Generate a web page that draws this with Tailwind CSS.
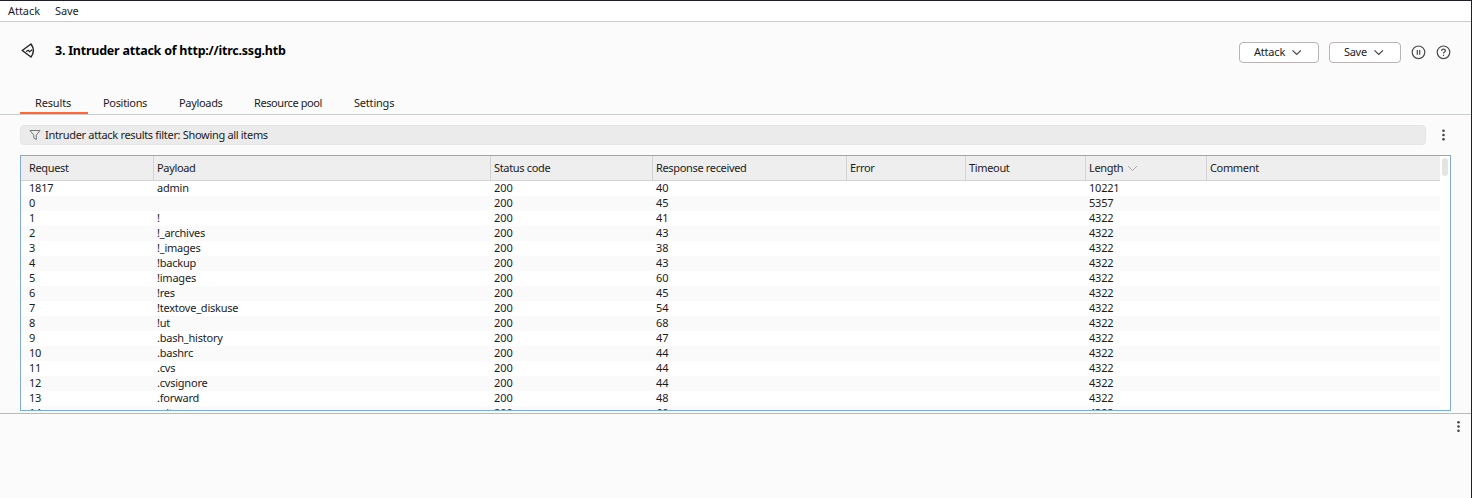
<!DOCTYPE html>
<html lang="en">
<head>
  <meta charset="UTF-8" />
  <meta name="viewport" content="width=device-width, initial-scale=1.0" />
  <title>Intruder attack</title>
  <script src="https://cdn.jsdelivr.net/npm/@tailwindcss/browser@4"></script>
</head>
<body class="h-screen overflow-hidden bg-[#fbfbfb] font-['Noto_Sans',sans-serif] text-[11px] leading-[15px] text-[#1c1c1c]">
  <div class="flex flex-col h-full border-t border-r border-[#20202b]">
    <!-- menu bar -->
    <nav class="flex h-[21px] shrink-0 items-center gap-[15px] border-b border-[#c8cecd] bg-white pb-0.5 pl-2">
      <span class="w-8 whitespace-nowrap tracking-[-0.05px]">Attack</span>
      <span class="whitespace-nowrap tracking-[-0.1px]">Save</span>
    </nav>

    <!-- title -->
    <header class="flex h-[60px] shrink-0 items-center pl-5 pr-5">
      <svg class="mt-[-4px] h-4 w-4" viewBox="0 0 16 16" fill="none" stroke="#222" stroke-width="1.4" stroke-linejoin="round">
        <path d="M2.2 8.5 L11 2 Q15.8 8.5 11 15 Z" />
        <path d="M6 9.6 L8.4 8.2 L9.4 9.8 L12.2 7.8" stroke-width="1.2" />
      </svg>
      <h1 class="ml-[19px] mt-[-4px] flex-1 text-[12.5px] font-bold tracking-[-0.23px] text-black">3. Intruder attack of http://itrc.ssg.htb</h1>
      <button class="flex h-[21px] w-20 items-center rounded border border-[#b9b3b3] bg-white pl-3.5">
        <span class="w-8 pb-0.5 text-left tracking-[-0.2px]">Attack</span>
        <svg class="ml-[5px] h-2.5 w-3" viewBox="0 0 12 10" fill="none" stroke="#444" stroke-width="1.2"><path d="M1.5 3.3 L5.7 7.5 L9.9 3.3" /></svg>
      </button>
      <button class="ml-2.5 flex h-[21px] w-[72px] items-center rounded border border-[#b9b3b3] bg-white pl-3.5">
        <span class="w-6 pb-0.5 text-left tracking-[-0.3px]">Save</span>
        <svg class="ml-[5px] h-2.5 w-3" viewBox="0 0 12 10" fill="none" stroke="#444" stroke-width="1.2"><path d="M1.5 3.3 L5.7 7.5 L9.9 3.3" /></svg>
      </button>
      <svg class="ml-[9px] h-4 w-4" viewBox="0 0 16 16" fill="none" stroke="#4a4a4a" stroke-width="1.2">
        <circle cx="8.5" cy="8.3" r="6.3" />
        <path d="M7.3 5.9 V10.7 M9.7 5.9 V10.7" />
      </svg>
      <svg class="ml-[9px] h-4 w-4" viewBox="0 0 16 16" fill="none" stroke="#4a4a4a" stroke-width="1.2">
        <circle cx="8.5" cy="8.3" r="6.3" />
        <path d="M6.6 6.9 Q6.6 5.2 8.5 5.2 Q10.4 5.2 10.4 6.7 Q10.4 7.6 9.4 8.1 Q8.5 8.6 8.5 9.6 M8.5 10.7 V11.9" />
      </svg>
    </header>

    <!-- tabs -->
    <div class="flex h-[33px] shrink-0 items-end border-b border-[#c8cecd] pl-5">
      <div class="h-[21px] w-[68px] border-b-2 border-[#ff6633] pl-[15px] pt-0.5 tracking-[-0.15px]">Results</div>
      <div class="h-[21px] w-[76px] pl-[15px] pt-0.5 tracking-[-0.32px]">Positions</div>
      <div class="h-[21px] w-[75px] pl-[15px] pt-0.5 tracking-[-0.32px]">Payloads</div>
      <div class="h-[21px] w-[100px] whitespace-nowrap pl-[15px] pt-0.5 tracking-[-0.42px]">Resource pool</div>
      <div class="h-[21px] pl-[15px] pt-0.5 tracking-[-0.2px]">Settings</div>
    </div>

    <!-- filter bar -->
    <div class="mt-2.5 flex h-5 shrink-0 items-center pl-5">
      <div class="flex h-5 w-[1406px] items-center rounded border border-[#e5e5e5] bg-[#ebebeb] pl-2">
        <svg class="h-3 w-3" viewBox="0 0 12 12" fill="none" stroke="#777" stroke-width="1"><path d="M1 1.5 H11 L7.3 6.2 V10.5 L4.8 9 V6.2 Z" /></svg>
        <span class="ml-1 whitespace-nowrap pb-0.5 tracking-[-0.32px]">Intruder attack results filter: Showing all items</span>
      </div>
      <svg class="ml-[15px] mt-[-1px] h-4 w-1" viewBox="0 0 4 16" fill="#444"><circle cx="2.5" cy="3.7" r="1.3" /><circle cx="2.5" cy="8" r="1.3" /><circle cx="2.5" cy="12.3" r="1.3" /></svg>
    </div>

    <!-- results table -->
    <div class="ml-5 mt-2.5 flex h-64 w-[1431px] shrink-0 overflow-hidden border border-[#7eadd9] bg-white">
      <div class="w-[1419px]">
        <div class="grid h-[25px] grid-cols-[133px_337px_162px_194px_119px_120px_121px_1fr] border-b border-[#d3d3d3] bg-[#eeeeee] leading-6 tracking-[-0.34px]">
          <div class="border-r border-[#d3d3d3] pl-2">Request</div>
          <div class="border-r border-[#d3d3d3] pl-[3px]">Payload</div>
          <div class="border-r border-[#d3d3d3] pl-[3px]">Status code</div>
          <div class="border-r border-[#d3d3d3] pl-[3px]">Response received</div>
          <div class="border-r border-[#d3d3d3] pl-[3px]">Error</div>
          <div class="border-r border-[#d3d3d3] pl-[3px]">Timeout</div>
          <div class="flex items-center border-r border-[#d3d3d3] pl-[3px]">
            <span class="w-[34px]">Length</span>
            <svg class="ml-[3px] h-2.5 w-3" viewBox="0 0 12 10" fill="none" stroke="#aaa" stroke-width="1"><path d="M2 3 L6.5 7.5 L11 3" /></svg>
          </div>
          <div class="pl-[3px]">Comment</div>
        </div>
        <div id="rows" class="leading-[13px]"></div>
      </div>
      <div class="w-2.5 pl-0.5 pt-0.5">
        <div class="h-[18px] w-1.5 rounded-full bg-[#e4e4e4]"></div>
      </div>
    </div>

    <!-- lower pane -->
    <div class="mt-0.5 flex flex-1 items-start justify-end border-t border-[#b9b9b9] pr-[11px] pt-1">
      <svg class="h-4 w-1" viewBox="0 0 4 16" fill="#444"><circle cx="2.5" cy="4.2" r="1.3" /><circle cx="2.5" cy="8.5" r="1.3" /><circle cx="2.5" cy="12.8" r="1.3" /></svg>
    </div>
  </div>

  <script>
    // request, payload, status, response received, length
    const results = [
      [1817, 'admin', 200, 40, 10221],
      [0, '', 200, 45, 5357],
      [1, '!', 200, 41, 4322],
      [2, '!_archives', 200, 43, 4322],
      [3, '!_images', 200, 38, 4322],
      [4, '!backup', 200, 43, 4322],
      [5, '!images', 200, 60, 4322],
      [6, '!res', 200, 45, 4322],
      [7, '!textove_diskuse', 200, 54, 4322],
      [8, '!ut', 200, 68, 4322],
      [9, '.bash_history', 200, 47, 4322],
      [10, '.bashrc', 200, 44, 4322],
      [11, '.cvs', 200, 44, 4322],
      [12, '.cvsignore', 200, 44, 4322],
      [13, '.forward', 200, 48, 4322],
      [14, '.git', 200, 60, 4322],
    ];

    document.getElementById('rows').innerHTML = results.map(([req, payload, status, received, length]) => `
      <div class="grid h-[15px] grid-cols-[133px_337px_162px_194px_119px_120px_121px_1fr] even:bg-[#fafafa]">
        <div class="pl-2 tracking-[-0.2px]">${req}</div>
        <div class="pl-[3px] tracking-[-0.22px]">${payload}</div>
        <div class="pl-[3px]">${status}</div>
        <div class="pl-[3px]">${received}</div>
        <div></div>
        <div></div>
        <div class="pl-[3px] tracking-[-0.2px]">${length}</div>
        <div></div>
      </div>
    `).join('');
  </script>
</body>
</html>
